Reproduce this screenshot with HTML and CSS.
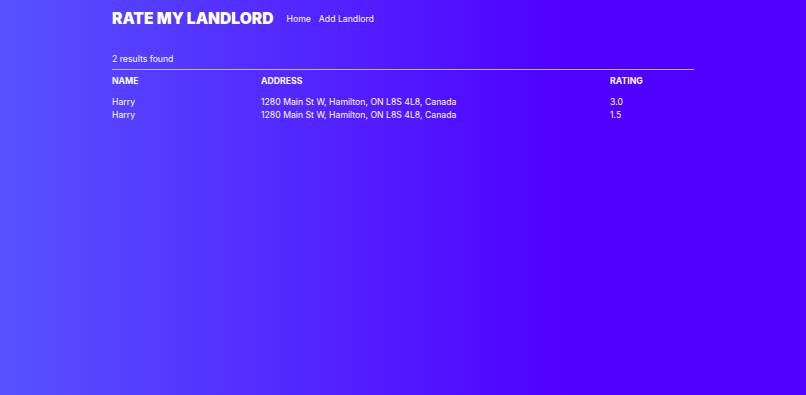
FILE: index.html
```html
<!DOCTYPE html>
<html lang="en">
<head>
  <meta charset="UTF-8">
  <meta name="viewport" content="width=device-width, initial-scale=1.0">
  <link rel="stylesheet" href="styles.css">
  <title>Rate My Landlord</title>
</head>
<body>
  <div class="main">
    <header class="top">
      <a href="#" class="logo">RATE MY LANDLORD</a>
      <nav class="nav">
        <a href="#">Home</a>
        <a href="#">Add Landlord</a>
      </nav>
    </header>

    <div class="count">2 results found</div>

    <table class="results">
      <thead>
        <tr>
          <th class="col-name">NAME</th>
          <th class="col-address">ADDRESS</th>
          <th class="col-rating">RATING</th>
        </tr>
      </thead>
      <tbody>
        <tr>
          <td>Harry</td>
          <td>1280 Main St W, Hamilton, ON L8S 4L8, Canada</td>
          <td>3.0</td>
        </tr>
        <tr>
          <td>Harry</td>
          <td>1280 Main St W, Hamilton, ON L8S 4L8, Canada</td>
          <td>1.5</td>
        </tr>
      </tbody>
    </table>
  </div>
</body>
</html>
```

FILE: styles.css
```css
* {
  margin: 0;
  padding: 0;
  box-sizing: border-box;
}

html, body {
  min-height: 100%;
}

body {
  min-height: 100vh;
  background: linear-gradient(90deg, #5652ff 0%, #5000ff 70%);
  color: #fff;
  font-family: "Inter", "Open Sans", sans-serif;
}

.main {
  width: 582px;
  margin: 0 auto;
}

.top {
  display: flex;
  align-items: center;
  height: 36px;
}

.logo {
  font-size: 15.6px;
  font-weight: 900;
  color: #fff;
  text-decoration: none;
}

.nav {
  display: flex;
  gap: 8px;
  margin-left: 13px;
  padding-top: 1px;
}

.nav a {
  color: #fff;
  text-decoration: none;
  font-size: 8.7px;
}

.count {
  margin-top: 17px;
  font-size: 8.7px;
  line-height: 12px;
  padding-bottom: 4px;
  border-bottom: 1px solid #c0b6ff;
}

.results {
  width: 100%;
  border-collapse: collapse;
  font-size: 8.7px;
}

.results th {
  text-align: left;
  font-weight: 700;
  line-height: 12px;
  padding-top: 5px;
  padding-bottom: 9px;
}

.results td {
  line-height: 13px;
  height: 13px;
}

.col-name {
  width: 149px;
}

.col-address {
  width: 349px;
}
```
